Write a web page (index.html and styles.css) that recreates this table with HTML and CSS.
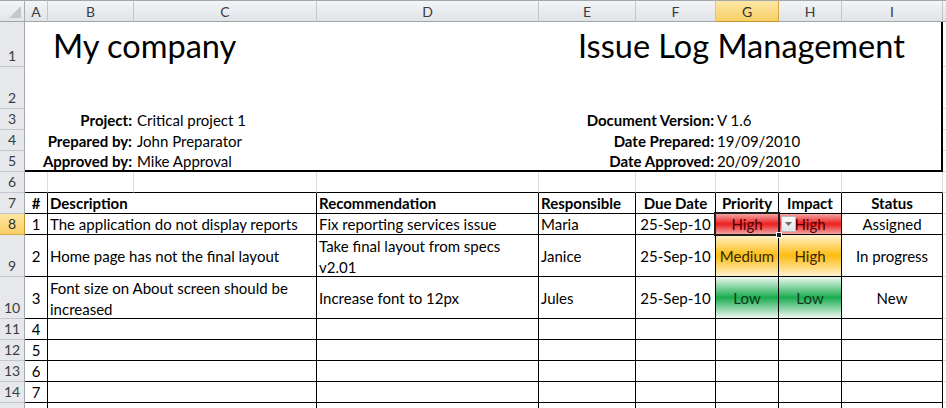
FILE: index.html
```html
<!DOCTYPE html>
<html>
<head>
<meta charset="utf-8">
<title>Issue Log Management</title>
<link rel="stylesheet" href="styles.css">
</head>
<body>
<div class="sheet">
  <!-- column headers -->
  <div class="corner"></div>
  <div class="ch">A</div>
  <div class="ch">B</div>
  <div class="ch">C</div>
  <div class="ch">D</div>
  <div class="ch">E</div>
  <div class="ch">F</div>
  <div class="ch ch-sel">G</div>
  <div class="ch">H</div>
  <div class="ch">I</div>
  <div class="ch ch-last"></div>

  <!-- document header box (rows 1-5) -->
  <div class="box">
    <div class="bx"></div>
    <div class="bx title title-left">My company</div>
    <div class="bx title title-right">Issue Log Management</div>
    <div class="bx row-empty"></div>

    <div class="bx lbl">Project:</div>
    <div class="bx val">Critical project 1</div>
    <div class="bx lbl lbl-r">Document Version:</div>
    <div class="bx val val-r">V 1.6</div>

    <div class="bx lbl">Prepared by:</div>
    <div class="bx val">John Preparator</div>
    <div class="bx lbl lbl-r">Date Prepared:</div>
    <div class="bx val val-r">19/09/2010</div>

    <div class="bx lbl">Approved by:</div>
    <div class="bx val">Mike Approval</div>
    <div class="bx lbl lbl-r">Date Approved:</div>
    <div class="bx val val-r">20/09/2010</div>
  </div>

  <div class="rh">1</div><div class="c"></div>
  <div class="rh">2</div><div class="c"></div>
  <div class="rh">3</div><div class="c"></div>
  <div class="rh">4</div><div class="c"></div>
  <div class="rh">5</div><div class="c"></div>

  <!-- row 6 -->
  <div class="rh">6</div>
  <div class="c edge"></div><div class="c edge"></div><div class="c edge"></div><div class="c edge"></div><div class="c edge"></div><div class="c edge"></div><div class="c edge"></div><div class="c edge"></div><div class="c edge"></div>
  <div class="c"></div>

  <!-- row 7 : table header -->
  <div class="rh">7</div>
  <div class="c t th ctr">#</div>
  <div class="c t th span2">Description</div>
  <div class="c t th">Recommendation</div>
  <div class="c t th">Responsible</div>
  <div class="c t th ctr">Due Date</div>
  <div class="c t th ctr">Priority</div>
  <div class="c t th ctr">Impact</div>
  <div class="c t th ctr">Status</div>
  <div class="c"></div>

  <!-- row 8 -->
  <div class="rh rh-sel">8</div>
  <div class="c t ctr">1</div>
  <div class="c t span2">The application do not display reports</div>
  <div class="c t">Fix reporting services issue</div>
  <div class="c t">Maria</div>
  <div class="c t ctr">25-Sep-10</div>
  <div class="c t ctr lvl-high active">High<span class="selbox"><span class="handle"></span></span></div>
  <div class="c t ctr lvl-high has-dd"><span class="dd"><svg width="7" height="4" viewBox="0 0 7 4"><path d="M0 0h7L3.5 4z" fill="#6d6d6d"/></svg></span>High</div>
  <div class="c t ctr">Assigned</div>
  <div class="c"></div>

  <!-- row 9 -->
  <div class="rh">9</div>
  <div class="c t ctr">2</div>
  <div class="c t span2">Home page has not the final layout</div>
  <div class="c t wrap">Take final layout from specs<br>v2.01</div>
  <div class="c t">Janice</div>
  <div class="c t ctr">25-Sep-10</div>
  <div class="c t ctr lvl-med">Medium</div>
  <div class="c t ctr lvl-med">High</div>
  <div class="c t ctr">In progress</div>
  <div class="c"></div>

  <!-- row 10 -->
  <div class="rh">10</div>
  <div class="c t ctr">3</div>
  <div class="c t span2 wrap">Font size on About screen should be<br>increased</div>
  <div class="c t">Increase font to 12px</div>
  <div class="c t">Jules</div>
  <div class="c t ctr">25-Sep-10</div>
  <div class="c t ctr lvl-low">Low</div>
  <div class="c t ctr lvl-low">Low</div>
  <div class="c t ctr">New</div>
  <div class="c"></div>

  <!-- rows 11-15 -->
  <div class="rh">11</div>
  <div class="c t ctr">4</div><div class="c t span2"></div><div class="c t"></div><div class="c t"></div><div class="c t"></div><div class="c t"></div><div class="c t"></div><div class="c t"></div>
  <div class="c"></div>

  <div class="rh">12</div>
  <div class="c t ctr">5</div><div class="c t span2"></div><div class="c t"></div><div class="c t"></div><div class="c t"></div><div class="c t"></div><div class="c t"></div><div class="c t"></div>
  <div class="c"></div>

  <div class="rh">13</div>
  <div class="c t ctr">6</div><div class="c t span2"></div><div class="c t"></div><div class="c t"></div><div class="c t"></div><div class="c t"></div><div class="c t"></div><div class="c t"></div>
  <div class="c"></div>

  <div class="rh">14</div>
  <div class="c t ctr">7</div><div class="c t span2"></div><div class="c t"></div><div class="c t"></div><div class="c t"></div><div class="c t"></div><div class="c t"></div><div class="c t"></div>
  <div class="c"></div>

  <div class="rh"></div>
  <div class="c t"></div><div class="c t span2"></div><div class="c t"></div><div class="c t"></div><div class="c t"></div><div class="c t"></div><div class="c t"></div><div class="c t"></div>
  <div class="c"></div>
</div>
</body>
</html>
```

FILE: styles.css
```css
* { box-sizing: border-box; }

html, body {
  margin: 0;
  padding: 0;
  background: #ffffff;
  overflow: hidden;
}

body {
  font-family: Lato, "Liberation Sans", sans-serif;
  font-size: 15px;
  color: #000;
}

.sheet {
  display: grid;
  width: 946px;
  height: 408px;
  overflow: hidden;
  grid-template-columns: 25px 23px 86px 183px 222px 97px 80px 63px 63px 101px 1fr;
  grid-template-rows: 22px 45px 42px 21px 21px 21px 21px 21px 21px 42px 42px 21px 21px 21px 21px 21px;
}

/* ---------- headers ---------- */
.corner {
  position: relative;
  background: linear-gradient(#f3f4f6, #e2e5e9);
  border-top: 1px solid #a3a7ad;
  border-right: 1px solid #a9aeb4;
  border-bottom: 1px solid #9fa4aa;
}
.corner::after {
  content: "";
  position: absolute;
  right: 3px;
  bottom: 3px;
  border-style: solid;
  border-width: 0 0 12px 12px;
  border-color: transparent transparent #c3c7cc transparent;
}

.ch {
  display: flex;
  align-items: center;
  justify-content: center;
  background: linear-gradient(#f3f4f6, #e0e3e7);
  border-top: 1px solid #a3a7ad;
  border-right: 1px solid #c3c7cd;
  border-bottom: 1px solid #9fa4aa;
  color: #3a3d42;
  font-size: 14px;
}
.ch-sel {
  background: linear-gradient(#fde7a6, #f7cf66);
  border-right-color: #d8a845;
  border-bottom-color: #c3952f;
  color: #303030;
}
.ch-last { border-right: none; }

.rh {
  display: flex;
  align-items: flex-end;
  justify-content: center;
  padding-bottom: 1px;
  background: #e6e8ec;
  border-right: 1px solid #a3a8ae;
  border-bottom: 1px solid #c3c7cd;
  color: #3a3d42;
  font-size: 14px;
  line-height: 18px;
}
.rh-sel {
  background: linear-gradient(#fde6a2, #f8cf68);
  border-bottom-color: #d8a845;
  border-right-color: #c3952f;
  color: #303030;
}

/* ---------- document header box ---------- */
.box {
  grid-column: 2 / 11;
  grid-row: 2 / 7;
  display: grid;
  grid-template-columns: 23px 86px 183px 222px 97px 80px 63px 63px 1fr;
  grid-template-rows: 45px 42px 21px 21px 1fr;
  border-right: 2px solid #000;
  border-bottom: 2px solid #000;
  background: #fff;
}
.bx {
  display: flex;
  align-items: center;
  white-space: nowrap;
}
.title {
  font-size: 32.5px;
  line-height: 38px;
  align-items: flex-end;
  padding-bottom: 2px;
}
.title-left { grid-column: span 3; padding-left: 5px; }
.title-right { grid-column: span 5; padding-left: 39px; }
.row-empty { grid-column: span 9; }
.lbl {
  grid-column: span 2;
  justify-content: flex-end;
  font-weight: 700;
  padding-right: 2px;
}
.val { grid-column: span 2; padding-left: 3px; }
.val-r { grid-column: span 3; padding-left: 1px; }

/* ---------- cells ---------- */
.c {
  display: flex;
  align-items: center;
  padding: 0 2px;
  white-space: nowrap;
  overflow: hidden;
  border-right: 1px solid #dadcdf;
  border-bottom: 1px solid #dadcdf;
  min-width: 0;
}
.edge { border-bottom-color: #000; }
.t { border-right-color: #000; border-bottom-color: #000; }
.th { font-weight: 700; }
.ctr { justify-content: center; }
.span2 { grid-column: span 2; }
.wrap {
  white-space: normal;
  line-height: 21px;
  padding-top: 3px;
}

/* gradient level fills */
.lvl-high {
  background: linear-gradient(#f4a3a3 0%, #ec1f1f 50%, #f4a3a3 100%);
  color: #4a0000;
}
.lvl-med {
  background: linear-gradient(#fff1cc 0%, #fdbd12 50%, #fff1cc 100%);
  color: #3a2800;
}
.lvl-low {
  background: linear-gradient(#eef9f1 0%, #1aac4f 50%, #eef9f1 100%);
  color: #0d3b1c;
}

/* active cell selection + dropdown */
.active { position: relative; overflow: visible; }
.selbox {
  position: absolute;
  left: -2px;
  top: -2px;
  right: -2px;
  bottom: -2px;
  border: 2px solid #1f1f1f;
  z-index: 2;
}
.handle {
  position: absolute;
  right: -4px;
  bottom: -4px;
  width: 6px;
  height: 6px;
  background: #1f1f1f;
  border: 1px solid #fff;
}
.has-dd { position: relative; }
.dd {
  position: absolute;
  left: 2px;
  top: 2px;
  width: 15px;
  height: 16px;
  display: flex;
  align-items: center;
  justify-content: center;
  background: linear-gradient(#fbfbfb, #e3e4e6);
  border: 1px solid #b7babe;
}
```
